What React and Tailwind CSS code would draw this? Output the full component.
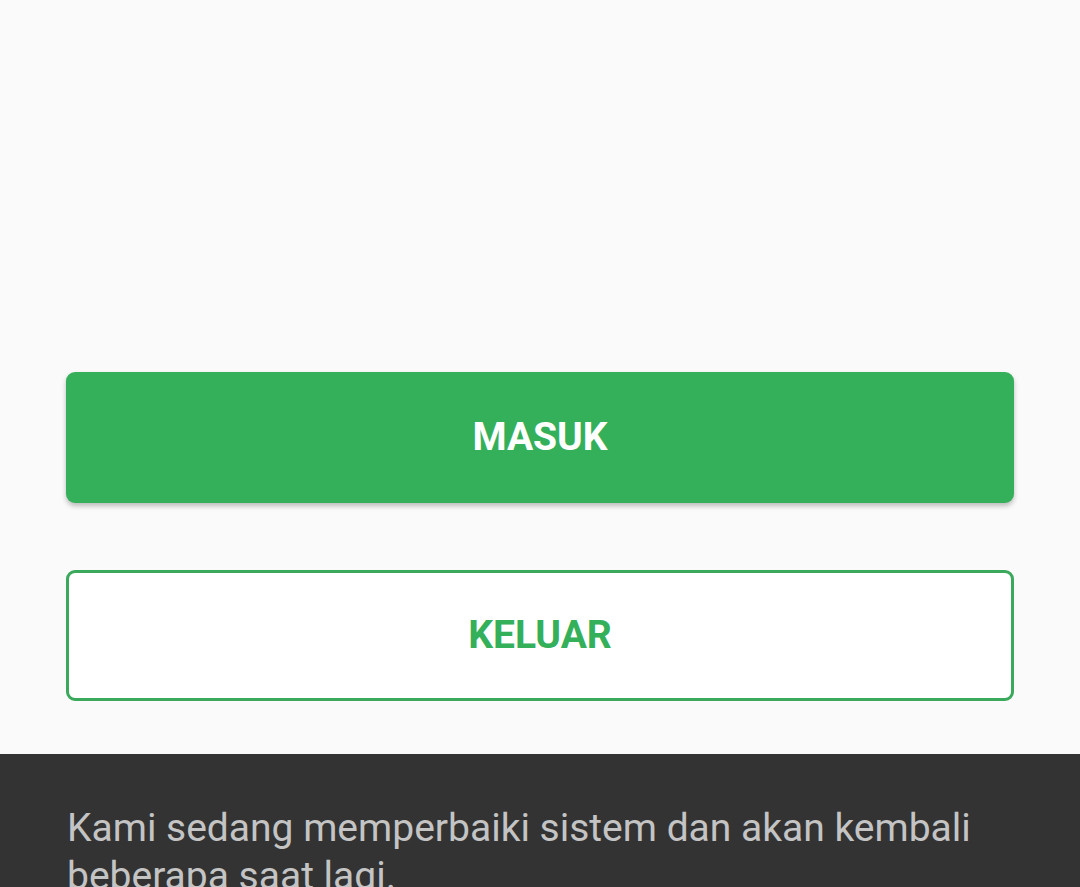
export default function App() {
  return (
    <div className="w-[1080px] h-[887px] overflow-hidden bg-[#fafafa] flex flex-col" style={{ fontFamily: "Roboto, 'Liberation Sans', sans-serif" }}>
      <div className="h-[372px] shrink-0" />
      <div className="px-[66px] flex flex-col gap-[67px]">
        <button className="h-[131px] w-full rounded-[9px] bg-[#34b05a] text-white text-[39px] font-bold shadow-[0_3px_5px_rgba(0,0,0,0.25)]">
          MASUK
        </button>
        <button className="h-[131px] w-full rounded-[9px] bg-white border-[3px] border-[#3aa95b] text-[#34b05a] text-[39px] font-bold">
          KELUAR
        </button>
      </div>
      <div className="mt-[53px] flex-1 bg-[#333333] px-[67px] pt-[50px]">
        <p className="text-[39px] leading-[48px] text-[#c4c4c4]">
          Kami sedang memperbaiki sistem dan akan kembali beberapa saat lagi.
        </p>
      </div>
    </div>
  );
}
